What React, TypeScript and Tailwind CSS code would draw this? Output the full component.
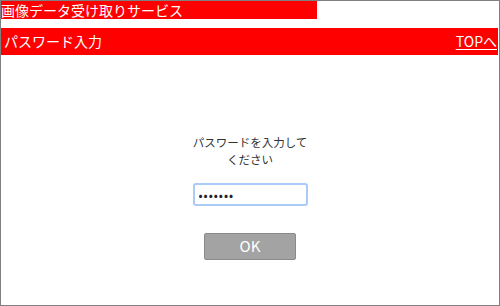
import React from 'react';

export default function App() {
  return (
    <div className="w-[500px] h-[306px] border border-[#808080] bg-white flex flex-col" style={{ fontFamily: '"Noto Sans CJK JP", "Noto Sans", sans-serif' }}>
      <div className="w-[316px] h-[18px] bg-[#ff0000] text-white text-[14px] leading-[18px] whitespace-nowrap">
        画像データ受け取りサービス
      </div>
      <div className="mt-[9px] mr-[1px] h-[27px] bg-[#ff0000] text-white text-[14px] flex items-center justify-between pl-[3px] pr-[1px]">
        <span>パスワード入力</span>
        <a href="#" className="underline underline-offset-2">TOPへ</a>
      </div>
      <div className="flex flex-col items-center pt-[79px]">
        <p className="text-[11.5px] leading-[17px] text-[#333333] text-center">
          パスワードを入力して
          <br />
          ください
        </p>
        <input
          type="password"
          value="1234567"
          readOnly
          className="mt-[15px] w-[115px] h-[23px] rounded-[3px] border-2 border-[#a9cbf5] px-[4px] text-[12px] tracking-[1px] text-[#222] outline-none"
        />
        <button className="mt-[27px] w-[92px] h-[27px] rounded-[2px] border border-[#8a8a8a] bg-[#a3a3a3] text-white text-[15px]">
          OK
        </button>
      </div>
    </div>
  );
}
